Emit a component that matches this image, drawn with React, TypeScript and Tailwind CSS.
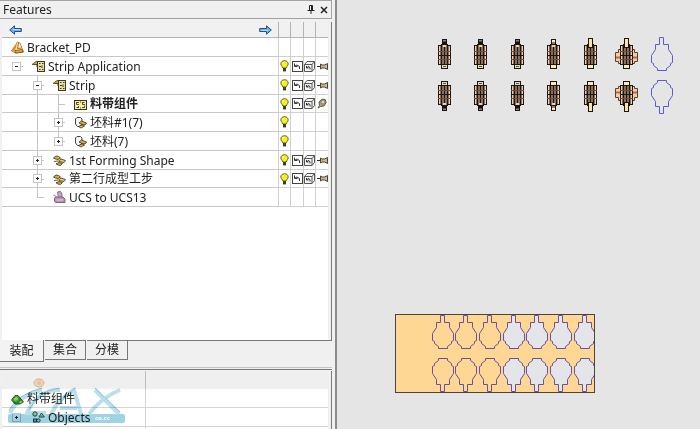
import { useState, type ReactNode } from 'react';

type Guide = 'none' | 'line' | 'tee' | 'end' | 'root' | 'plus' | 'minus' | 'last';

type TreeRow = {
	label: string;
	icon: ReactNode;
	guides: Guide[];
	marks: ReactNode[];
	bold?: boolean;
	short?: boolean;
};

const cjk = "font-['Noto_Sans','Noto_Sans_CJK_SC',sans-serif]";

function PartIcon() {
	return (
		<svg width="13" height="13" viewBox="0 0 13 13" className="shrink-0">
			<path d="M0.5 10 L6.5 1 L9 2 L12.5 11 L5 12 Z" fill="#fff3b0" stroke="#a8681c" strokeWidth="0.8" />
			<path d="M0.5 9.5 L6 2.5 L5 6.5 L3.5 10 Z" fill="#e58a2a" />
			<path d="M4 9.5 L11 8.5 L12.2 11 L4 12 Z" fill="#f0a52c" stroke="#7a4a10" strokeWidth="0.8" />
			<path d="M7.5 2 L6.5 7.5 L10.5 7" fill="none" stroke="#7a4a10" strokeWidth="0.8" />
		</svg>
	);
}

function StripIcon() {
	return (
		<svg width="13" height="13" viewBox="0 0 13 13" className="shrink-0">
			<path d="M0 4.5 L4 1.5 H6 V4.5 Z" fill="#c9a24a" stroke="#5c4a1c" strokeWidth="0.8" />
			<path d="M2 4.5 H6 V6 H4" fill="none" stroke="#5c4a1c" />
			<rect x="5.5" y="1.5" width="7" height="10" fill="#e9dca4" stroke="#3f3a22" />
			<path d="M7 3.5 H8.5 M10 3.5 H11.5 M7 6.5 H9 M10 5.5 V8 M7 9.5 H8.5 M10 9.5 H11.5" stroke="#3f3a22" />
		</svg>
	);
}

function LayoutIcon() {
	return (
		<svg width="13" height="13" viewBox="0 0 13 13" className="shrink-0">
			<rect x="0.5" y="2.5" width="12" height="9" fill="#f3edab" stroke="#38351c" />
			<path d="M2.5 4.5 H5 M2.5 4 V6.5 H5 M2.5 9.5 H5 M4.5 8 V10 M8 4.5 H10.5 M8.5 4 V6.5 H11 M8 9.5 H10.5 M10.5 7.5 V10" fill="none" stroke="#57521f" />
			<path d="M6.5 3 V5 M6.5 9 V11" stroke="#a59b45" />
		</svg>
	);
}

function BlankIcon() {
	return (
		<svg width="13" height="13" viewBox="0 0 13 13" className="shrink-0">
			<path d="M1.5 3 L3 1.5 H6.5 L8 3 V8 L6 10.5 H3.5 L1.5 8 Z" fill="#f5f5f5" stroke="#444" />
			<path d="M5 7 L7.5 5 L10 6 L12.5 7 L11 9 L8 8.5 Z" fill="#d8a93c" stroke="#3a2c10" strokeWidth="0.8" />
			<path d="M4.5 10.5 L8 9 L10.5 10 L7 12 Z" fill="#e9c868" stroke="#3a2c10" strokeWidth="0.8" />
		</svg>
	);
}

function FormingIcon() {
	return (
		<svg width="13" height="13" viewBox="0 0 13 13" className="shrink-0">
			<path d="M0.5 4 L3 2 L5.5 2.5 L7.5 4 L5 5.5 L2.5 5 Z" fill="#e6ad3b" stroke="#3a2c10" strokeWidth="0.8" />
			<path d="M5.5 7 L8 5 L12.5 6.5 L11 8.5 L8 8 Z" fill="#f0c968" stroke="#3a2c10" strokeWidth="0.8" />
			<path d="M1 7.5 L5 7 M3 9.8 L6 8.5 L9.5 9.5 L7.5 11.5 L5 11 Z" fill="#d8a93c" stroke="#3a2c10" strokeWidth="0.8" />
		</svg>
	);
}

function UcsIcon() {
	return (
		<svg width="13" height="13" viewBox="0 0 13 13" className="shrink-0">
			<path d="M4.5 1 L7.5 0.5 L9 3 V6.5 H5.5 Z" fill="#c9a3c4" stroke="#8d688a" />
			<path d="M1.5 7 L3 6 H10 L12 8 V11.5 H2.5 L1.5 10 Z" fill="#b98fb4" stroke="#85627f" />
			<path d="M3.5 9 H10" stroke="#ecd9ea" />
			<path d="M0.5 4.5 L3.5 5.5" stroke="#b5679a" />
		</svg>
	);
}

function Bulb() {
	return (
		<svg width="9" height="12" viewBox="0 0 9 12">
			<path d="M4.5 0.7 C2.2 0.7 0.8 2.3 0.8 4 C0.8 5.7 2.6 6.3 2.8 8 H6.2 C6.4 6.3 8.2 5.7 8.2 4 C8.2 2.3 6.8 0.7 4.5 0.7 Z" fill="#f8f01c" stroke="#5c5a10" strokeWidth="0.9" />
			<rect x="3" y="8" width="3" height="3.4" fill="#3c3c2c" />
			<path d="M2.6 3.5 L3.8 2" stroke="#fff" />
		</svg>
	);
}

function Sketch() {
	return (
		<svg width="11" height="11" viewBox="0 0 11 11">
			<rect x="0.5" y="0.5" width="10" height="10" fill="#fff" stroke="#444" />
			<path d="M2.5 2.5 V5.5 H5.5 M3 5 L5 4 L7.5 5.5 V8" fill="none" stroke="#333" />
		</svg>
	);
}

function Cube() {
	return (
		<svg width="11" height="11" viewBox="0 0 11 11">
			<path d="M0.5 3.5 L3 0.5 H10.5 V7.5 L8 10.5 H0.5 Z M0.5 3.5 H8 V10.5 M8 3.5 L10.5 0.5" fill="#f4f4f4" stroke="#555" />
			<path d="M2.5 5 V7 H4.5 M3 6.5 L5 5.5 L6 7 V8.5" fill="none" stroke="#333" />
		</svg>
	);
}

function Pin() {
	return (
		<svg width="11" height="9" viewBox="0 0 11 9">
			<path d="M0 4.5 H4" stroke="#333" />
			<path d="M3.5 2 V7 L5 6 H7.5 L10.5 7.5 V1.5 L7.5 3 H5 Z" fill="#c9ba8c" stroke="#4a4330" />
		</svg>
	);
}

function PinOff() {
	return (
		<svg width="10" height="11" viewBox="0 0 10 11">
			<path d="M1 10 L2.5 7.5 L2 4 L5 1.2 L8.2 1.5 L9.2 4.5 L7 8 L3.5 8.5 Z" fill="#aaa082" stroke="#5e5944" />
			<circle cx="6" cy="4" r="2" fill="#ddd6be" stroke="#6c664e" strokeWidth="0.7" />
		</svg>
	);
}

function Arrow({ flip = false }: { flip?: boolean }) {
	return (
		<svg width="13" height="10" viewBox="0 0 13 10" className={flip ? 'rotate-180' : ''}>
			<path d="M0.7 5 L5.5 0.8 V3.5 H12.3 V6.5 H5.5 V9.2 Z" fill="#6fb0ea" stroke="#1f4f94" strokeWidth="1" />
			<path d="M4 4.5 H11" stroke="#b5dafa" />
		</svg>
	);
}

const full = [<Bulb />, <Sketch />, <Cube />, <Pin />];
const empty = [null, null, null, null];

const rows: TreeRow[] = [
	{ label: 'Bracket_PD', icon: <PartIcon />, guides: [], marks: empty },
	{ label: 'Strip Application', icon: <StripIcon />, guides: ['root'], marks: full },
	{ label: 'Strip', icon: <StripIcon />, guides: ['none', 'minus'], marks: full },
	{ label: '料带组件', icon: <LayoutIcon />, guides: ['none', 'line', 'tee'], marks: [<Bulb />, <Sketch />, <Cube />, <PinOff />], bold: true, short: true },
	{ label: '坯料#1(7)', icon: <BlankIcon />, guides: ['none', 'line', 'plus'], marks: [<Bulb />, null, null, null] },
	{ label: '坯料(7)', icon: <BlankIcon />, guides: ['none', 'line', 'last'], marks: [<Bulb />, null, null, null] },
	{ label: '1st Forming Shape', icon: <FormingIcon />, guides: ['none', 'plus'], marks: full },
	{ label: '第二行成型工步', icon: <FormingIcon />, guides: ['none', 'plus'], marks: full, short: true },
	{ label: 'UCS to UCS13', icon: <UcsIcon />, guides: ['none', 'end'], marks: empty },
];

const tabs = ['装配', '集合', '分模'];

function Expander({ open, name }: { open: boolean; name: string }) {
	return (
		<button aria-label={name} aria-expanded={open} className="relative flex size-[9px] shrink-0 items-center justify-center border border-[#c4c4c4] bg-white">
			<svg width="3" height="3" viewBox="0 0 3 3" className="shrink-0">
				<path d={open ? 'M0 1.5 H3' : 'M0 1.5 H3 M1.5 0 V3'} stroke="#222" />
			</svg>
		</button>
	);
}

function GuideCell({ kind, name }: { kind: Guide; name: string }) {
	const up = kind !== 'none' && kind !== 'root';
	const down = kind === 'line' || kind === 'tee' || kind === 'plus' || kind === 'minus';
	const across = kind !== 'none' && kind !== 'line';
	return (
		<span className="relative flex w-[21px] shrink-0 items-center justify-center self-stretch">
			{up && <span className="absolute top-0 left-[10px] h-1/2 w-px bg-[#c4c4c4]" />}
			{down && <span className="absolute -bottom-px left-[10px] h-[calc(50%+1px)] w-px bg-[#c4c4c4]" />}
			{across && <span className="absolute top-1/2 left-[10px] h-px w-[7px] bg-[#c4c4c4]" />}
			{(kind === 'plus' || kind === 'last') && <Expander open={false} name={`Expand ${name}`} />}
			{(kind === 'minus' || kind === 'root') && <Expander open name={`Collapse ${name}`} />}
		</span>
	);
}

function FeatureTree() {
	return (
		<table className="w-full table-fixed border-separate border-spacing-0">
			<colgroup>
				<col />
				<col className="w-3" />
				<col className="w-[13px]" />
				<col className="w-3" />
				<col className="w-[13px]" />
			</colgroup>
			<thead>
				<tr className="h-4 bg-[#f1f1f1]">
					<th className="border-b border-[#b4b4b4] p-0">
						<div className="flex h-[15px] items-center justify-between pr-1.5 pl-[7px]">
							<button aria-label="Back"><Arrow /></button>
							<button aria-label="Forward"><Arrow flip /></button>
						</div>
					</th>
					{[0, 1, 2, 3].map((i) => (
						<th key={i} className="border-b border-l border-[#b4b4b4] p-0" />
					))}
				</tr>
			</thead>
			<tbody>
				{rows.map((row) => (
					<tr key={row.label}>
						<td className="border-b border-[#c8c8c8] p-0">
							<div className={`flex items-center pl-1 ${row.short ? 'h-[17px]' : 'h-[18px]'}`}>
								{row.guides.map((kind, i) => (
									<GuideCell key={i} kind={kind} name={row.label} />
								))}
								<span className="ml-[5px] flex items-center gap-[3px] pt-px">
									{row.icon}
									<span className={`whitespace-nowrap leading-[18px] ${row.bold ? 'font-bold' : ''}`}>{row.label}</span>
								</span>
							</div>
						</td>
						{row.marks.map((mark, i) => (
							<td key={i} className="border-b border-l border-[#d0d0d0] p-0">
								<div className="flex items-center justify-center">{mark}</div>
							</td>
						))}
					</tr>
				))}
			</tbody>
		</table>
	);
}

function Watermark() {
	return (
		<>
			<svg width="122" height="52" viewBox="0 0 122 52" className="pointer-events-none absolute top-1.5 left-1 mix-blend-multiply" aria-hidden="true">
				<rect x="4" y="37" width="117" height="9" rx="2" fill="#9fd3e4" />
				<g fill="none" stroke="#b9dfea" strokeWidth="4">
					<path d="M6 36 Q14 19 38 13" />
					<path d="M56 13 Q34 12 23 36 H42" />
					<path d="M47 37 Q56 20 70 13 L77 37 M56 31 H73" />
					<path d="M91 13 L115 37 M116 13 Q98 20 85 37" />
				</g>
				<g fill="none" stroke="#8cc4d6" strokeWidth="1">
					<path d="M5 33 Q14 17 38 11 M25 33 Q34 14 55 11 M55 28 Q62 17 71 11 M91 11 L116 35" />
				</g>
				<ellipse cx="35" cy="6" rx="5" ry="4" fill="#f9e3cf" stroke="#e6bb93" />
				<circle cx="35" cy="6" r="2" fill="#f1cda9" />
			</svg>
			<svg width="122" height="52" viewBox="0 0 122 52" className="pointer-events-none absolute top-1.5 left-1" aria-hidden="true">
				<text x="91" y="43" fontSize="6" fontWeight="700" fill="#fff">co.cc</text>
			</svg>
		</>
	);
}

function ObjectsPanel() {
	return (
		<section className="relative h-[58px] shrink-0 overflow-hidden pr-[3px] pl-0.5">
			<table className="w-full table-fixed border-separate border-spacing-0">
				<colgroup>
					<col className="w-36" />
					<col />
				</colgroup>
				<thead>
					<tr className="h-[18px] bg-[#efefef]">
						<th className="border-r border-[#bdbdbd] p-0" />
						<th className="p-0" />
					</tr>
				</thead>
				<tbody className="bg-white">
					<tr>
						<td className="border-r border-b border-[#d4d4d4] p-0">
							<div className="flex h-[18px] items-center gap-[3px] pt-0.5 pl-[9px]">
								<svg width="13" height="11" viewBox="0 0 13 11">
									<path d="M0.5 6 L4 1.5 H7 L12.5 8 L9 10 H4 Z" fill="#3f9a34" stroke="#285f20" />
									<path d="M2.5 5 L5.5 2.5 L8 5.5 L5 8 Z" fill="#8ad25c" />
									<path d="M8 8 L10 6.5 L11.5 8 L9 9.5 Z" fill="#b9d94a" />
								</svg>
								<span>料带组件</span>
							</div>
						</td>
						<td className="border-b border-[#d4d4d4] p-0" />
					</tr>
					<tr>
						<td className="border-r border-b border-[#d4d4d4] p-0">
							<div className="flex h-[18px] items-center pt-px pl-1">
								<span className="flex w-[21px] justify-center"><Expander open={false} name="Expand Objects" /></span>
								<svg width="13" height="13" viewBox="0 0 13 13" className="ml-[5px] shrink-0">
									<circle cx="3" cy="3" r="2.2" fill="#b8e0b0" stroke="#28583a" />
									<path d="M7 6 L9.5 2 L12.3 6 Z" fill="#c9e5c0" stroke="#28583a" />
									<rect x="1.5" y="8" width="3" height="3" fill="#7eb6c8" stroke="#24424c" />
									<circle cx="6.5" cy="9.5" r="1.7" fill="#dfe7da" stroke="#24424c" />
								</svg>
								<span className="ml-[3px] leading-[18px]">Objects</span>
							</div>
						</td>
						<td className="border-b border-[#d4d4d4] p-0" />
					</tr>
					<tr className="h-[18px]">
						<td className="border-r border-[#d4d4d4] p-0" />
						<td className="p-0" />
					</tr>
				</tbody>
			</table>
			<Watermark />
		</section>
	);
}

const blank = 'M-2 0 H2 V7 H7 V12 L11 18 V25 L9 26 V28 L5 31 V33 H-4 V31 L-8 28 V26 L-10 25 V18 L-6 12 V7 H-2 Z';

function Formed({ stage }: { stage: number }) {
	return (
		<g stroke="#1d1512" strokeWidth="1">
			{stage === 6 && (
				<>
					<path d="M-7.5 10.5 H8.5 V13.5 H11.5 V22.5 H8.5 V24.5 H-7.5 V22.5 H-10.5 V13.5 H-7.5 Z" fill="#f4cf9c" stroke="#5a4030" />
					<path d="M-10 18.5 H11" stroke="#b06a4c" strokeWidth="2" />
				</>
			)}
			<rect x="-5.5" y="6.5" width="3" height="19" fill="#f0cdb0" />
			<rect x="3.5" y="6.5" width="3" height="19" fill="#f0cdb0" />
			<rect x="-2.5" y="5.5" width="6" height="24" fill="#efd3ac" />
			<path d="M-2.5 6 V26 M3.5 6 V26" strokeWidth="2" />
			<path d="M0.5 8 V25" strokeWidth="2" />
			<path d="M-6 16.5 H7" />
			<path d="M-6 12.5 H7 M-6 20.5 H7" stroke="#7a4636" />
			{stage < 5 ? (
				<>
					<rect x="-1.5" y="0.5" width="4" height="5" fill={stage === 4 ? '#fff0c0' : '#8a857a'} />
					<path d="M-2 4 H3" stroke="#15110f" strokeWidth={stage === 4 ? 1 : 3} />
				</>
			) : (
				<rect x="-1.5" y="-0.5" width="4" height="9" fill="#ffe3a4" />
			)}
			<rect x="-2.5" y="25.5" width="6" height="4" fill={stage < 4 ? '#e8dfb8' : '#ffe9b4'} />
			{stage < 4 && <path d="M-1 27.5 H2" stroke="#555048" />}
		</g>
	);
}

function StripCanvas() {
	const columns = [444, 480, 517, 553, 590, 626];
	const pockets = [442, 465, 489, 513, 536, 560, 584];
	return (
		<svg width="363" height="429" viewBox="337 0 363 429" role="img" aria-label="Strip layout">
			{columns.map((x, i) => (
				<g key={x}>
					<g transform={`translate(${x} 39)`}><Formed stage={i + 1} /></g>
					<g transform={`translate(${x} 111) scale(1 -1)`}><Formed stage={i + 1} /></g>
				</g>
			))}
			<g fill="none" stroke="#5a5cd0">
				<path d={blank} transform="translate(661.5 37.5)" />
				<path d={blank} transform="translate(661.5 113.5) scale(1 -1)" />
			</g>
			<clipPath id="plate"><rect x="395" y="314" width="200" height="80" /></clipPath>
			<rect x="395.5" y="314.5" width="199" height="78" fill="#ffd794" />
			<g clipPath="url(#plate)" stroke="#6b4fa0">
				{pockets.map((x, i) => (
					<g key={x} fill={i < 3 ? 'none' : '#e4e5e8'}>
						<path d={blank} transform={`translate(${x}.5 315.5)`} />
						<path d={blank} transform={`translate(${x}.5 391.5) scale(1 -1)`} />
					</g>
				))}
			</g>
			<rect x="395.5" y="314.5" width="199" height="78" fill="none" stroke="#4a4538" />
		</svg>
	);
}

export default function App() {
	const [active, setActive] = useState(0);

	return (
		<div className={`flex h-screen overflow-hidden bg-[#e5e5e5] text-[12px] text-[#222] ${cjk}`}>
			<aside className="flex w-[337px] shrink-0 flex-col border-r-2 border-[#8c8c8c] bg-[#f0f0f0] pr-[3px]">
				<header className="flex h-[19px] shrink-0 items-center justify-between border-t border-r border-b border-[#a3a3a3] pr-[3px] pl-[3px]">
					<h1 className="leading-4">Features</h1>
					<div className="flex items-center gap-[5px]">
						<button aria-label="Pin panel">
							<svg width="8" height="9" viewBox="0 0 8 9">
								<path d="M2.5 5 V0.5 H5.5 V5 M0.5 5.5 H7.5 M4 6 V9 M4.5 1 V5" fill="none" stroke="#222" />
							</svg>
						</button>
						<button aria-label="Close panel">
							<svg width="8" height="8" viewBox="0 0 8 8">
								<path d="M1 1 L7 7 M7 1 L1 7" stroke="#222" strokeWidth="1.5" />
							</svg>
						</button>
					</div>
				</header>
				<main className="mt-[3px] min-h-0 flex-1 border-r border-[#7a7a7a] bg-[#f0f0f0] pr-[3px] pl-0.5">
					<div className="h-full bg-white">
						<FeatureTree />
					</div>
				</main>
				<nav className="flex h-[27px] shrink-0 items-start gap-px" role="tablist">
					{tabs.map((tab, i) => (
						<button
							key={tab}
							role="tab"
							aria-selected={active === i}
							onClick={() => setActive(i)}
							className={
								active === i
									? 'h-[22px] w-11 border-r border-b border-[#777] bg-[#f3f3f3]'
									: 'h-5 w-[41px] border-t border-r border-b border-[#777]'
							}
						>
							{tab}
						</button>
					))}
					<span className="-ml-px h-px flex-1 bg-[#777]" />
				</nav>
				<div className="h-[3px] shrink-0 border-t border-b border-t-[#c4c4c4] border-b-[#777]" />
				<div className="mt-px shrink-0 border-r border-[#7a7a7a]">
					<ObjectsPanel />
				</div>
			</aside>
			<section className="min-w-0 flex-1">
				<StripCanvas />
			</section>
		</div>
	);
}
